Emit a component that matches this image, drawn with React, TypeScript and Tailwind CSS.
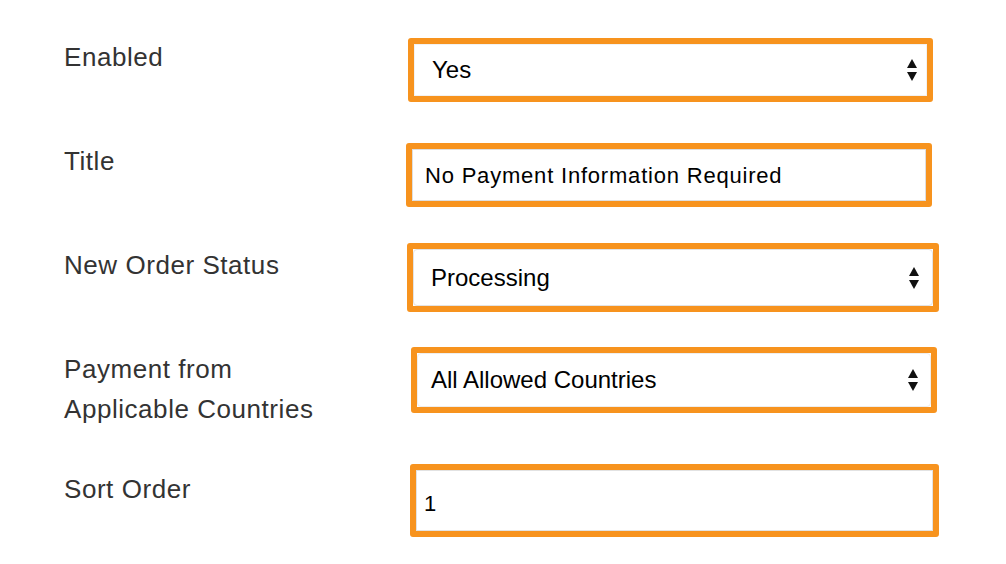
import React from "react";

const Arrows = () => (
  <svg width="10" height="22" viewBox="0 0 10 22" className="shrink-0">
    <polygon points="5,0 10,9 0,9" fill="#111" />
    <polygon points="0,13 10,13 5,22" fill="#111" />
  </svg>
);

export default function App() {
  const label = "text-[26px] leading-[40px] tracking-[0.55px] text-[#333]";
  return (
    <div
      className="w-[1006px] h-[564px] bg-white pt-[37px] pl-[64px] overflow-hidden"
      style={{ fontFamily: '"Liberation Sans", Arial, sans-serif' }}
    >
      {/* Enabled */}
      <div className="flex items-start h-[104px]">
        <div className={`w-[344px] ${label}`}>Enabled</div>
        <div className="mt-[1px] w-[525px] h-[64px] border-[6px] border-[#f7931e] rounded-[3px] bg-white">
          <div className="h-full flex items-center justify-between pl-[17px] pr-[9px] border border-[#f2f2f2]">
            <span className="text-[24px] text-black">Yes</span>
            <Arrows />
          </div>
        </div>
      </div>
      {/* Title */}
      <div className="flex items-start h-[104px]">
        <div className={`w-[342px] ${label}`}>Title</div>
        <div className="mt-[2px] w-[526px] h-[64px] border-[6px] border-[#f7931e] rounded-[3px] bg-white">
          <div className="h-full flex items-center pl-[12px] border border-[#dedede]">
            <span className="text-[22px] tracking-[0.8px] text-black">No Payment Information Required</span>
          </div>
        </div>
      </div>
      {/* New Order Status */}
      <div className="flex items-start h-[104px]">
        <div className={`w-[343px] ${label}`}>New Order Status</div>
        <div className="-mt-[2px] w-[532px] h-[69px] border-[6px] border-[#f7931e] rounded-[3px] bg-white">
          <div className="h-full flex items-center justify-between pl-[17px] pr-[13px] border border-[#e3e3e3] rounded-[4px]">
            <span className="text-[24px] text-black">Processing</span>
            <Arrows />
          </div>
        </div>
      </div>
      {/* Payment from Applicable Countries */}
      <div className="flex items-start h-[120px]">
        <div className={`w-[347px] ${label}`}>
          <div>Payment from</div>
          <div>Applicable Countries</div>
        </div>
        <div className="-mt-[2px] w-[526px] h-[66px] border-[6px] border-[#f7931e] rounded-[3px] bg-white">
          <div className="h-full flex items-center justify-between pl-[13px] pr-[12px] border border-[#eeeeee] rounded-[4px]">
            <span className="text-[24px] text-black">All Allowed Countries</span>
            <Arrows />
          </div>
        </div>
      </div>
      {/* Sort Order */}
      <div className="flex items-start">
        <div className={`w-[346px] ${label}`}>Sort Order</div>
        <div className="-mt-[5px] w-[529px] h-[73px] border-[6px] border-[#f7931e] rounded-[3px] bg-white">
          <div className="h-full flex items-center pl-[7px] pt-[6px] border border-[#e2e2e2]">
            <span className="text-[22px] text-black">1</span>
          </div>
        </div>
      </div>
    </div>
  );
}
